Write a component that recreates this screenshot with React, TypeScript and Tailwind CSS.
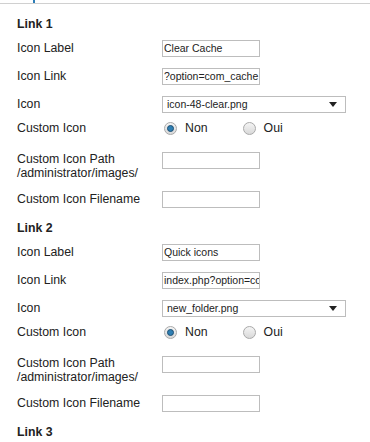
import type React from "react";

type LinkData = {
    title: string;
    label: string;
    link: string;
    icon: string;
};

const links: LinkData[] = [
    { title: "Link 1", label: "Clear Cache", link: "?option=com_cache", icon: "icon-48-clear.png" },
    { title: "Link 2", label: "Quick icons", link: "index.php?option=com_cpanel", icon: "new_folder.png" },
];

const TextBox = ({ value }: { value?: string }) => (
    <div className="w-[98px] h-[17px] border border-[#bdbdbd] bg-white overflow-hidden whitespace-nowrap text-[10.5px] leading-[15px] text-[#222] pl-[1px]">
        {value}
    </div>
);

const Radio = ({ checked }: { checked?: boolean }) => (
    <span className="w-[13px] h-[13px] rounded-full border border-[#a9a9a9] bg-gradient-to-b from-[#f4f4f4] to-[#d9d9d9] flex items-center justify-center">
        {checked && (
            <span className="w-[7px] h-[7px] rounded-full bg-[#2f7fb3] border border-[#1d4f73]" />
        )}
    </span>
);

const Row = ({ label, children }: { label: React.ReactNode; children: React.ReactNode }) => (
    <div className="flex flex-row items-start">
        <div className="w-[145px] text-[12.3px] leading-[16px] text-[#222]">{label}</div>
        {children}
    </div>
);

const LinkBlock = ({ data }: { data: LinkData }) => (
    <div className="flex flex-col">
        <div className="h-[16px] text-[12.3px] leading-[16px] font-bold text-[#222]">{data.title}</div>
        <div className="mt-[8px]">
            <Row label="Icon Label"><TextBox value={data.label} /></Row>
        </div>
        <div className="mt-[11px]">
            <Row label="Icon Link"><TextBox value={data.link} /></Row>
        </div>
        <div className="mt-[11px]">
            <Row label="Icon">
                <div className="w-[184px] h-[17px] border border-[#bdbdbd] bg-white flex flex-row items-center justify-between pl-[4px] pr-[8px] text-[10.5px] text-[#222]">
                    <span>{data.icon}</span>
                    <svg width="8" height="5" viewBox="0 0 8 5"><path d="M0 0h8L4 5z" fill="#222" /></svg>
                </div>
            </Row>
        </div>
        <div className="mt-[7px]">
            <Row label="Custom Icon">
                <div className="flex flex-row items-center h-[16px] pl-[2px] text-[12.3px] text-[#222]">
                    <Radio checked />
                    <span className="ml-[8px]">Non</span>
                    <span className="ml-[35px]"><Radio /></span>
                    <span className="ml-[8px]">Oui</span>
                </div>
            </Row>
        </div>
        <div className="mt-[16px]">
            <Row label={<div className="leading-[14px]">Custom Icon Path<br />/administrator/images/</div>}>
                <TextBox />
            </Row>
        </div>
        <div className="mt-[11px]">
            <Row label="Custom Icon Filename"><TextBox /></Row>
        </div>
    </div>
);

const App: React.FC = () => {
    return (
        <div className="w-[370px] h-[442px] bg-white overflow-hidden relative" style={{ fontFamily: '"Liberation Sans", Arial, sans-serif' }}>
            <div className="h-[3px] pl-[33px]">
                <div className="w-[2px] h-[3px] bg-[#2d7db7]" />
            </div>
            <div className="h-[1px] bg-[#d0d0d0]" />
            <div className="pl-[17px] pt-[12px] flex flex-col space-y-[12px]">
                {links.map((l, i) => (
                    <LinkBlock data={l} key={i} />
                ))}
                <div className="h-[16px] text-[12.3px] leading-[16px] font-bold text-[#222]">Link 3</div>
            </div>
        </div>
    );
};

export default App;
